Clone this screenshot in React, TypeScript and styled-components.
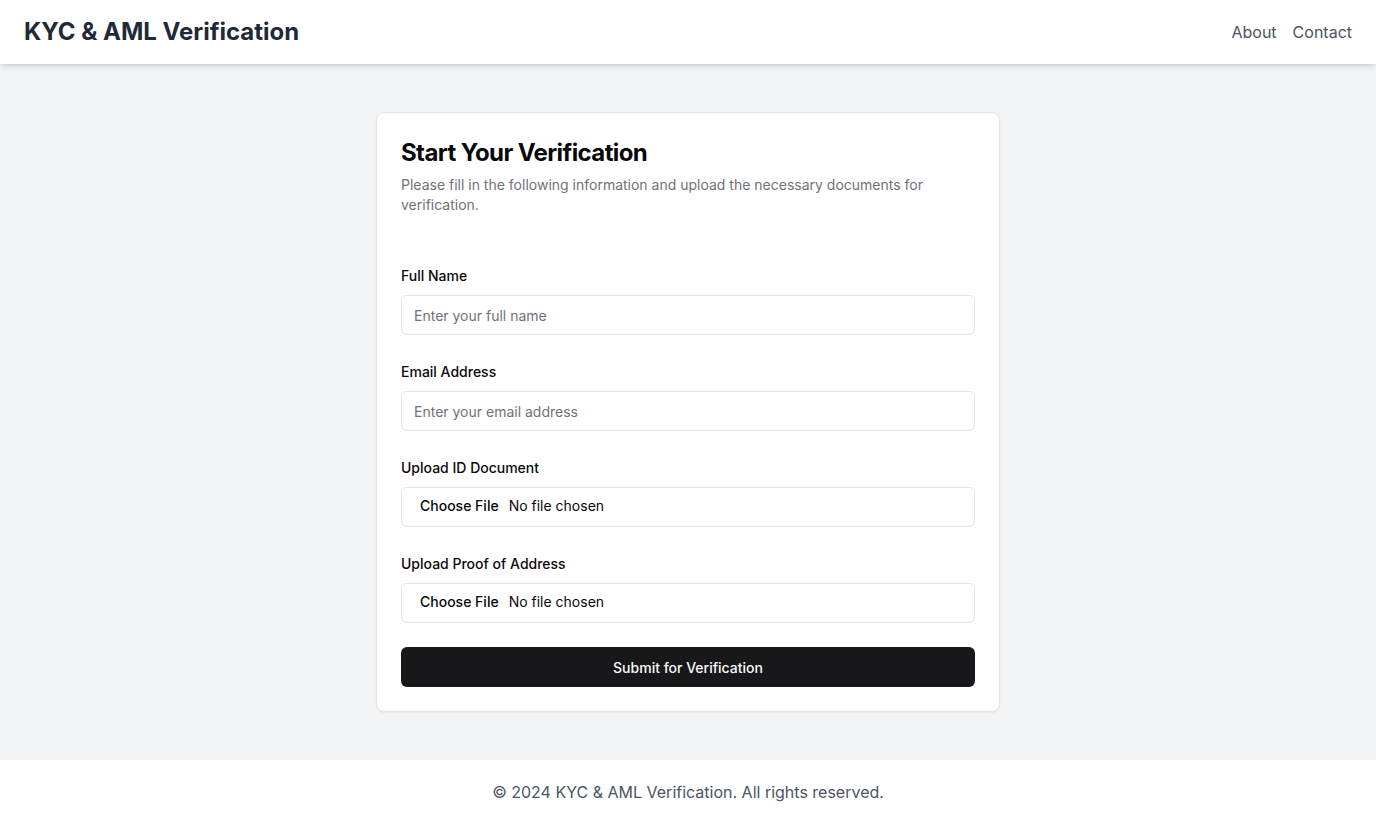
import styled, { createGlobalStyle } from 'styled-components';

const GlobalStyle = createGlobalStyle`
    * {
        box-sizing: border-box;
    }
    body {
        margin: 0;
        font-family: Inter, "Noto Sans", "Liberation Sans", sans-serif;
        background: #f3f4f6;
        color: #09090b;
    }
`;

const Page = styled.div`
    display: flex;
    flex-direction: column;
    min-height: 824px;
`;

const Header = styled.header`
    height: 64px;
    background: #fff;
    box-shadow: 0 4px 6px -1px rgba(0, 0, 0, 0.1), 0 2px 4px -2px rgba(0, 0, 0, 0.1);
    display: flex;
    align-items: center;
    justify-content: space-between;
    padding: 0 24px;
    position: relative;
    z-index: 1;
`;

const Brand = styled.h1`
    margin: 0;
    font-size: 24px;
    line-height: 32px;
    font-weight: 700;
    color: #1f2937;
`;

const Nav = styled.nav`
    display: flex;
    gap: 16px;
`;

const NavLink = styled.a`
    color: #4b5563;
    font-size: 16px;
    line-height: 24px;
    text-decoration: none;
`;

const Main = styled.main`
    flex: 1;
    display: flex;
    justify-content: center;
    align-items: flex-start;
    padding: 48px 0;
`;

const Card = styled.div`
    width: 624px;
    background: #fff;
    border: 1px solid #e4e4e7;
    border-radius: 8px;
    box-shadow: 0 1px 2px 0 rgba(0, 0, 0, 0.05);
    padding: 24px;
`;

const CardHeader = styled.div`
    display: flex;
    flex-direction: column;
    gap: 6px;
    margin-bottom: 51px;
`;

const CardTitle = styled.h2`
    margin: 0;
    font-size: 24px;
    line-height: 32px;
    font-weight: 700;
    letter-spacing: -0.025em;
`;

const CardDescription = styled.p`
    margin: 0;
    font-size: 14px;
    line-height: 20px;
    color: #71717a;
`;

const Form = styled.form`
    display: flex;
    flex-direction: column;
    gap: 27px;
`;

const Field = styled.div`
    display: flex;
    flex-direction: column;
    gap: 9px;
`;

const Label = styled.label`
    font-size: 14px;
    line-height: 20px;
    font-weight: 500;
`;

const Input = styled.input`
    height: 40px;
    width: 100%;
    border: 1px solid #e4e4e7;
    border-radius: 6px;
    padding: 8px 12px;
    font-family: inherit;
    font-size: 14px;
    color: #09090b;
    background: #fff;
    outline: none;

    &::placeholder {
        color: #71717a;
    }

    &::file-selector-button {
        border: 0;
        background: transparent;
        font-family: inherit;
        font-size: 14px;
        font-weight: 500;
        color: #09090b;
        padding: 1px 6px;
        margin-right: 4px;
    }
`;

const SubmitButton = styled.button`
    height: 40px;
    margin-top: -3px;
    width: 100%;
    border: 0;
    border-radius: 6px;
    background: #18181b;
    color: #fafafa;
    font-family: inherit;
    font-size: 14px;
    font-weight: 500;
    cursor: pointer;
`;

const Footer = styled.footer`
    height: 64px;
    background: #fff;
    display: flex;
    align-items: center;
    justify-content: center;
    color: #4b5563;
    font-size: 16px;
`;

const fields = [
    { id: 'name', label: 'Full Name', type: 'text', placeholder: 'Enter your full name' },
    { id: 'email', label: 'Email Address', type: 'email', placeholder: 'Enter your email address' },
    { id: 'idDoc', label: 'Upload ID Document', type: 'file' },
    { id: 'address', label: 'Upload Proof of Address', type: 'file' },
];

export default function App() {
    return (
        <Page>
            <GlobalStyle />
            <Header>
                <Brand>KYC &amp; AML Verification</Brand>
                <Nav>
                    <NavLink href="#">About</NavLink>
                    <NavLink href="#">Contact</NavLink>
                </Nav>
            </Header>
            <Main>
                <Card>
                    <CardHeader>
                        <CardTitle>Start Your Verification</CardTitle>
                        <CardDescription>
                            Please fill in the following information and upload the necessary documents for verification.
                        </CardDescription>
                    </CardHeader>
                    <Form onSubmit={(e) => e.preventDefault()}>
                        {fields.map((f) => (
                            <Field key={f.id}>
                                <Label htmlFor={f.id}>{f.label}</Label>
                                <Input id={f.id} type={f.type} placeholder={f.placeholder} />
                            </Field>
                        ))}
                        <SubmitButton type="submit">Submit for Verification</SubmitButton>
                    </Form>
                </Card>
            </Main>
            <Footer>© 2024 KYC &amp; AML Verification. All rights reserved.</Footer>
        </Page>
    );
}
